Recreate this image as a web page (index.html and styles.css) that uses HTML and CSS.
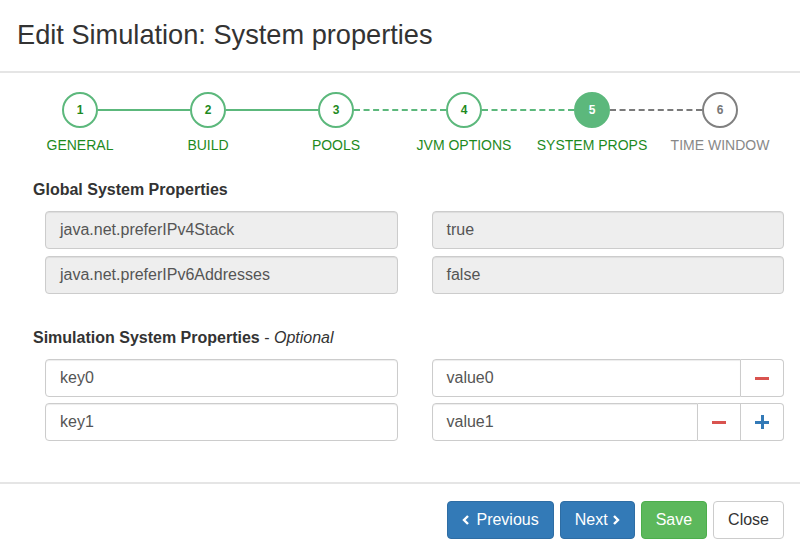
FILE: index.html
```html
<!DOCTYPE html>
<html>
<head>
<meta charset="utf-8">
<link rel="stylesheet" href="styles.css">
</head>
<body>
<div class="modal">
  <div class="modal-header">
    <h4 class="title">Edit Simulation: System properties</h4>
  </div>
  <div class="modal-body">
    <div class="stepper">
      <div class="step done"><div class="circle">1</div><div class="label">GENERAL</div></div>
      <div class="step done"><div class="circle">2</div><div class="label">BUILD</div></div>
      <div class="step done"><div class="circle">3</div><div class="label">POOLS</div></div>
      <div class="step visited"><div class="circle">4</div><div class="label">JVM OPTIONS</div></div>
      <div class="step active"><div class="circle">5</div><div class="label">SYSTEM PROPS</div></div>
      <div class="step pending"><div class="circle">6</div><div class="label">TIME WINDOW</div></div>
    </div>

    <h5 class="section-title">Global System Properties</h5>
    <div class="grid">
      <div class="field readonly">java.net.preferIPv4Stack</div>
      <div class="field readonly">true</div>
      <div class="field readonly">java.net.preferIPv6Addresses</div>
      <div class="field readonly">false</div>
    </div>

    <h5 class="section-title sim">Simulation System Properties <span class="opt">- <em>Optional</em></span></h5>
    <div class="grid tight">
      <div class="field">key0</div>
      <div class="group">
        <div class="field in-group">value0</div>
        <div class="addon"><span class="minus"></span></div>
      </div>
      <div class="field">key1</div>
      <div class="group">
        <div class="field in-group">value1</div>
        <div class="addon mid"><span class="minus"></span></div>
        <div class="addon"><span class="plus"></span></div>
      </div>
    </div>
  </div>
  <div class="modal-footer">
    <button class="btn btn-primary prev"><svg class="chev" width="8" height="10" viewBox="0 0 8 10"><polyline points="6,1 2,5 6,9" fill="none" stroke="#fff" stroke-width="2.4"/></svg> Previous</button>
    <button class="btn btn-primary">Next <svg class="chev" width="8" height="10" viewBox="0 0 8 10"><polyline points="2,1 6,5 2,9" fill="none" stroke="#fff" stroke-width="2.4"/></svg></button>
    <button class="btn btn-success">Save</button>
    <button class="btn btn-default">Close</button>
  </div>
</div>
</body>
</html>
```

FILE: styles.css
```css
* { box-sizing: border-box; }
html, body { margin: 0; padding: 0; background: #fff; }
body {
  font-family: "Liberation Sans", Arial, sans-serif;
  color: #333;
  width: 800px;
  height: 556px;
  overflow: hidden;
}
.modal {
  width: 800px;
  height: 556px;
  background: #fff;
  border-radius: 6px;
}
.modal-header {
  height: 73px;
  border-bottom: 2px solid #e5e5e5;
  padding: 19px 17px 0;
}
.title {
  margin: 0;
  font-size: 27.2px;
  font-weight: normal;
  line-height: 32px;
  color: #333;
}
.modal-body {
  height: 411px;
  border-bottom: 2px solid #e5e5e5;
  padding-top: 19px;
}
.stepper {
  display: flex;
  padding-left: 16px;
  height: 88px;
}
.step {
  width: 128px;
  display: flex;
  flex-direction: column;
  align-items: center;
  position: relative;
}
.step::after {
  content: "";
  position: absolute;
  top: 17px;
  left: 82px;
  width: 92px;
  height: 0;
  border-top: 2px solid #5cb87c;
}
.step:nth-child(3)::after,
.step:nth-child(4)::after { border-top-style: dashed; }
.step:nth-child(5)::after { border-top: 2px dashed #7a7a7a; }
.step:last-child::after { display: none; }
.circle {
  width: 36px;
  height: 36px;
  border-radius: 50%;
  border: 2px solid #5cb87c;
  display: flex;
  align-items: center;
  justify-content: center;
  font-size: 12px;
  font-weight: bold;
  color: #1e8a1e;
  background: #fff;
}
.step.active .circle { background: #5cb87c; color: #fff; }
.step.pending .circle { border-color: #808080; color: #777; }
.label {
  margin-top: 9px;
  font-size: 14px;
  color: #1e8a1e;
  white-space: nowrap;
  line-height: 16px;
}
.step.pending .label { color: #888; }

.section-title {
  margin: 0 0 11px 33px;
  font-size: 16px;
  font-weight: bold;
  line-height: 20px;
  color: #333;
}
.section-title.sim { margin-top: 34px; margin-bottom: 11px; }
.opt { font-weight: normal; }
.grid {
  display: grid;
  grid-template-columns: 1fr 1fr;
  column-gap: 34px;
  row-gap: 7px;
  margin: 0 16px 0 45px;
}
.grid.tight { row-gap: 6px; }
.field {
  height: 38px;
  border: 1px solid #ccc;
  border-radius: 4px;
  padding: 0 14px;
  font-size: 16px;
  line-height: 36px;
  color: #555;
  background: #fff;
  box-shadow: inset 0 1px 1px rgba(0,0,0,0.075);
}
.field.readonly { background: #eee; }
.group { display: flex; }
.field.in-group { flex: 1; border-radius: 4px 0 0 4px; }
.addon {
  width: 43px;
  height: 38px;
  border: 1px solid #ccc;
  border-left: none;
  display: flex;
  align-items: center;
  justify-content: center;
  background: #fff;
  border-radius: 0 4px 4px 0;
}
.addon.mid { border-radius: 0; }
.minus { width: 14px; height: 3px; background: #d9534f; display: block; }
.plus { width: 14px; height: 14px; position: relative; display: block; }
.plus::before, .plus::after { content: ""; position: absolute; background: #337ab7; }
.plus::before { left: 0; top: 6px; width: 14px; height: 3px; }
.plus::after { left: 6px; top: 0; width: 3px; height: 14px; }

.modal-footer {
  display: flex;
  justify-content: flex-end;
  gap: 6px;
  padding: 17px 16px 0;
}
.btn {
  height: 38px;
  border-radius: 4px;
  font-family: "Liberation Sans", Arial, sans-serif;
  font-size: 16px;
  padding: 0 14px;
  border: 1px solid transparent;
  color: #fff;
  display: flex;
  align-items: center;
  gap: 4px;
}
.btn.prev { gap: 6px; }
.btn-primary { background: #337ab7; border-color: #2e6da4; }
.btn-success { background: #5cb85c; border-color: #4cae4c; }
.btn-default { background: #fff; border-color: #ccc; color: #333; }
.chev { display: block; }
```
